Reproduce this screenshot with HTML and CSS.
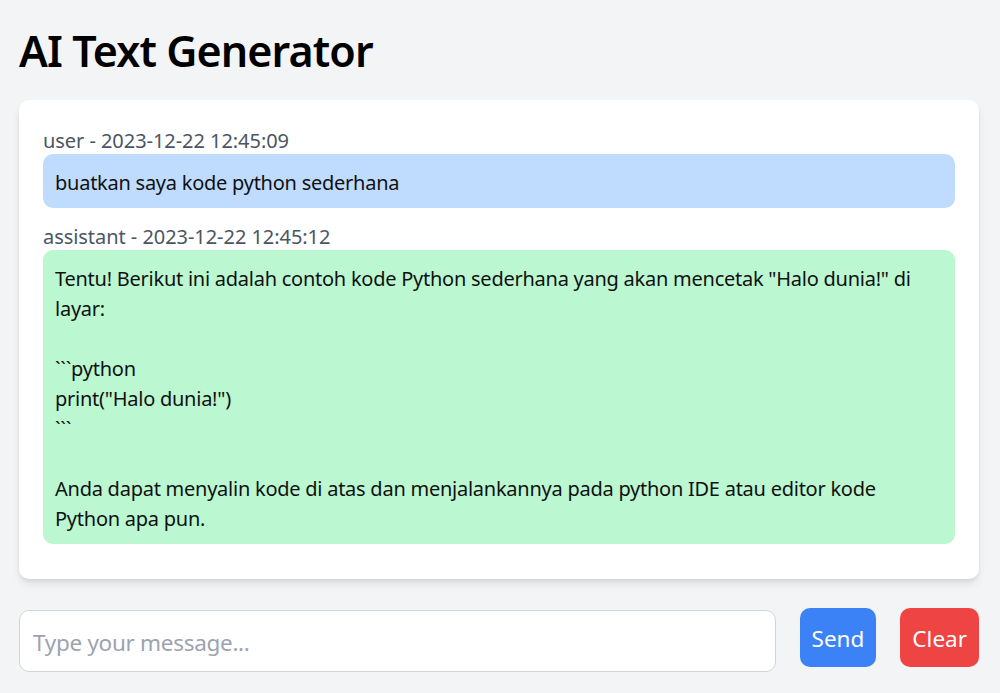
FILE: index.html
```html
<!DOCTYPE html>
<html lang="id">
<head>
<meta charset="utf-8">
<title>AI Text Generator</title>
<link rel="stylesheet" href="styles.css">
</head>
<body>
<div class="page">
  <h1 class="title">AI Text Generator</h1>
  <div class="chat-card">
    <div class="message">
      <div class="meta">user - 2023-12-22 12:45:09</div>
      <div class="bubble bubble-user">buatkan saya kode python sederhana</div>
    </div>
    <div class="message">
      <div class="meta">assistant - 2023-12-22 12:45:12</div>
      <div class="bubble bubble-assistant">Tentu! Berikut ini adalah contoh kode Python sederhana yang akan mencetak "Halo dunia!" di layar:

&#96;&#96;&#96;python
print("Halo dunia!")
&#96;&#96;&#96;

Anda dapat menyalin kode di atas dan menjalankannya pada python IDE atau editor kode Python apa pun.</div>
    </div>
  </div>
  <div class="composer">
    <input class="composer-input" type="text" placeholder="Type your message...">
    <button class="btn btn-send">Send</button>
    <button class="btn btn-clear">Clear</button>
  </div>
</div>
</body>
</html>
```
FILE: styles.css
```css
* { box-sizing: border-box; }

html, body {
  margin: 0;
  padding: 0;
  background: #f3f4f6;
}

body {
  font-family: "Noto Sans", "Open Sans", sans-serif;
  color: #111111;
}

.page {
  padding: 20px 21px 0 19px;
}

.title {
  margin: 0 0 24px 0;
  padding-top: 6px;
  font-size: 43px;
  line-height: 50px;
  font-weight: 600;
  letter-spacing: -0.9px;
  color: #000000;
}

.chat-card {
  background: #ffffff;
  border-radius: 10px;
  padding: 24px 24px 23px 24px;
  box-shadow: 0 5px 8px -1px rgba(0, 0, 0, 0.1), 0 2px 5px -2px rgba(0, 0, 0, 0.1);
}

.message {
  margin-bottom: 12px;
}

.meta {
  font-size: 20px;
  line-height: 26px;
  padding-top: 4px;
  color: #4b5563;
  letter-spacing: -0.05px;
}

.bubble {
  font-size: 20px;
  line-height: 30px;
  letter-spacing: -0.25px;
  padding: 14px 12px 10px 12px;
  border-radius: 10px;
  white-space: pre-wrap;
  color: #111111;
}

.bubble-user {
  background: #bfdbfe;
}

.bubble-assistant {
  background: #bbf7d0;
}

.composer {
  display: flex;
  align-items: flex-start;
  gap: 24px;
  margin-top: 29px;
}

.composer-input {
  flex: 1;
  margin-top: 2px;
  height: 62px;
  padding: 2px 13px 0 13px;
  border: 1px solid #d1d5db;
  border-radius: 10px;
  background: #ffffff;
  font-family: "Noto Sans", "Open Sans", sans-serif;
  font-size: 22.5px;
  letter-spacing: -0.3px;
  color: #111111;
  outline: none;
}

.composer-input::placeholder {
  color: #9ca3af;
}

.btn {
  height: 59px;
  padding: 2px 12px 0 12px;
  border: none;
  border-radius: 10px;
  font-family: "Noto Sans", "Open Sans", sans-serif;
  font-size: 22.5px;
  line-height: 35px;
  color: #ffffff;
  cursor: pointer;
}

.btn-send {
  background: #3b82f6;
}

.btn-clear {
  background: #ef4444;
}
```
